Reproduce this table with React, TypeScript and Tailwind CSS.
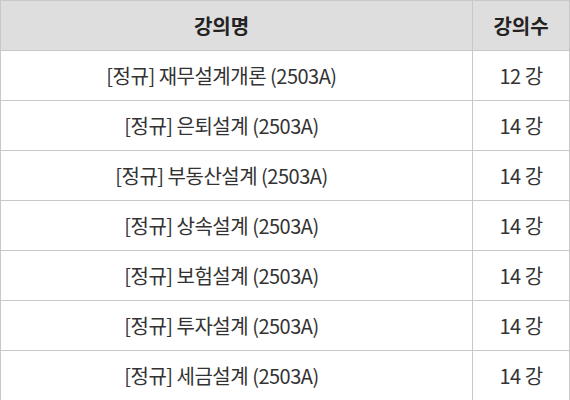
const rows = [
  { name: '[정규] 재무설계개론 (2503A)', count: '12 강' },
  { name: '[정규] 은퇴설계 (2503A)', count: '14 강' },
  { name: '[정규] 부동산설계 (2503A)', count: '14 강' },
  { name: '[정규] 상속설계 (2503A)', count: '14 강' },
  { name: '[정규] 보험설계 (2503A)', count: '14 강' },
  { name: '[정규] 투자설계 (2503A)', count: '14 강' },
  { name: '[정규] 세금설계 (2503A)', count: '14 강' },
];

export default function App() {
  return (
    <div
      className="w-[570px] h-[400px] bg-white"
      style={{ fontFamily: '"Noto Sans CJK KR", "Noto Sans", sans-serif' }}
    >
      <table className="w-full border-collapse border border-[#c8c8c8] text-[#333]">
        <thead>
          <tr className="h-[50px] bg-[#dedede]">
            <th className="border border-[#c8c8c8] pr-[30px] text-[20px] font-bold text-[#222]">강의명</th>
            <th className="w-[97px] border border-[#c8c8c8] text-[20px] font-bold text-[#222]">강의수</th>
          </tr>
        </thead>
        <tbody>
          {rows.map((r) => (
            <tr key={r.name} className="h-[50px]">
              <td className="border border-[#c8c8c8] pr-[30px] text-center text-[20px] tracking-[-0.5px]">{r.name}</td>
              <td className="border border-[#c8c8c8] text-center text-[20px] tracking-[-0.5px]">{r.count}</td>
            </tr>
          ))}
        </tbody>
      </table>
    </div>
  );
}
